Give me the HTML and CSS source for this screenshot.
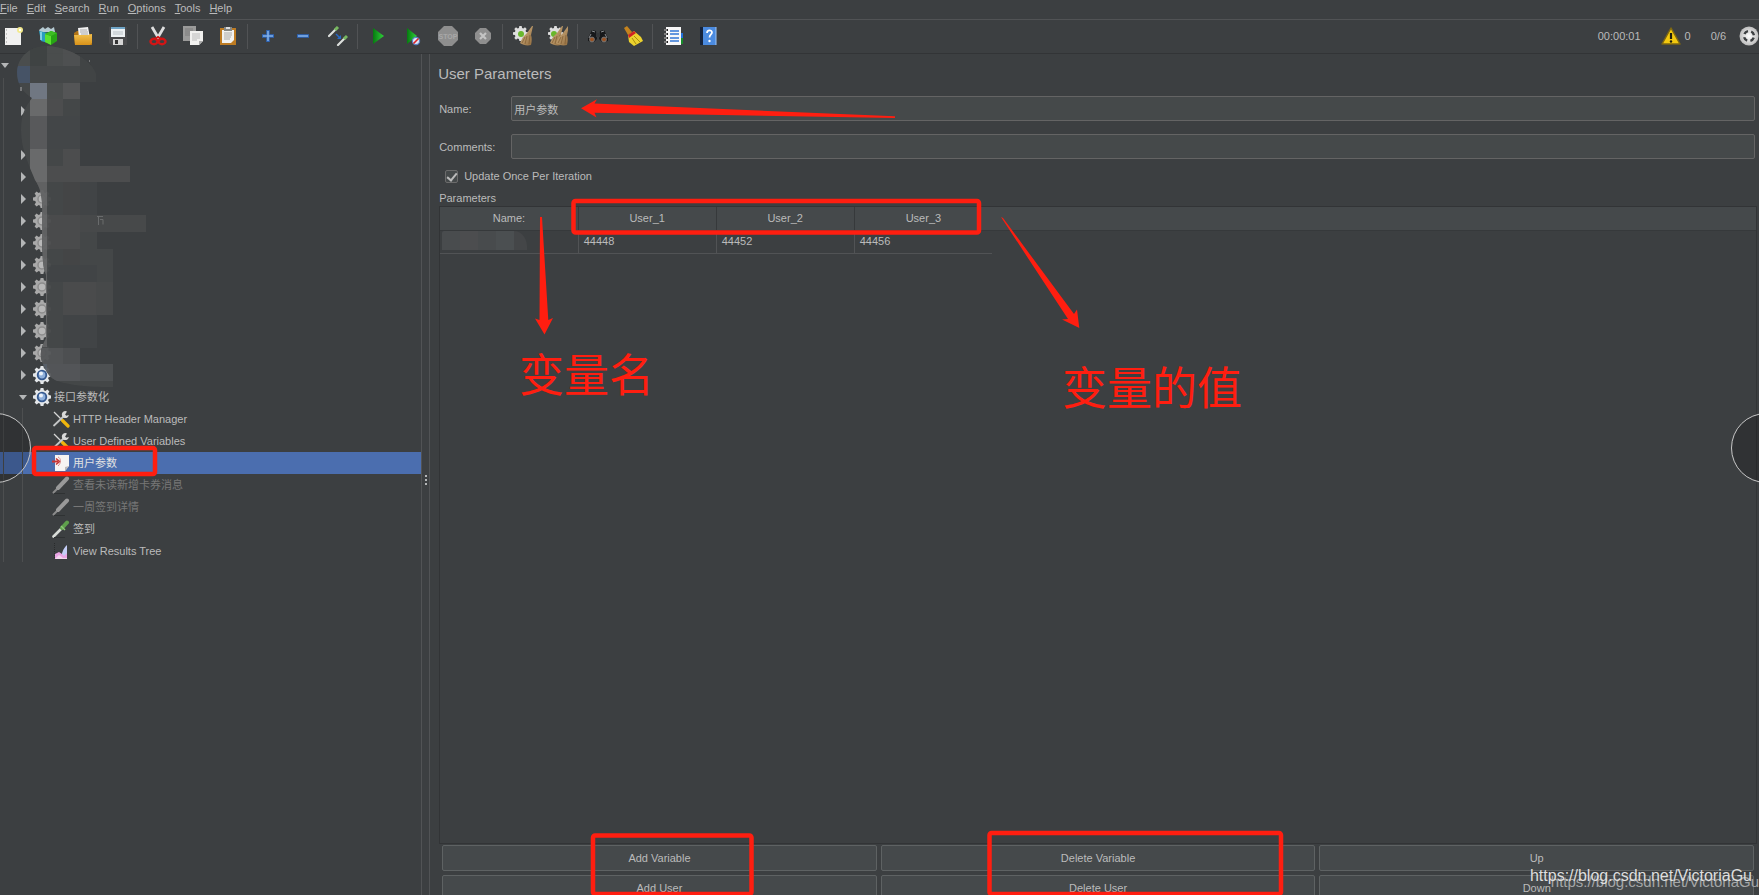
FILE: index.html
```html
<!DOCTYPE html>
<html lang="en">
<head>
<meta charset="utf-8">
<title>User Parameters</title>
<link rel="stylesheet" href="styles.css">
</head>
<body>
<svg class="sprite" aria-hidden="true">
  <defs>
    <linearGradient id="g-green" x1="0" y1="0" x2="1" y2="0"><stop offset="0" stop-color="#067a10"/><stop offset="1" stop-color="#2fd23a"/></linearGradient>
    <linearGradient id="g-yellow" x1="0" y1="0" x2="0" y2="1"><stop offset="0" stop-color="#f2c14e"/><stop offset="1" stop-color="#d8921a"/></linearGradient>
    <radialGradient id="g-ball"><stop offset="0" stop-color="#fff"/><stop offset="1" stop-color="#bdbdbd"/></radialGradient>
    <linearGradient id="g-broom" x1="0" y1="0" x2="1" y2="1"><stop offset="0" stop-color="#d9b98a"/><stop offset="1" stop-color="#8f6a3c"/></linearGradient>
  </defs>
  <symbol id="gear" viewBox="0 0 18 18">
    <path fill="currentColor" d="M7.600 0h2.800l.5 2.300 1.500.6 2-1.300 2 2-1.300 2 .6 1.500 2.300.5v2.800l-2.300.5-.6 1.500 1.300 2-2 2-2-1.300-1.500.6-.5 2.300H7.600l-.5-2.300-1.500-.6-2 1.300-2-2 1.300-2-.6-1.500L0 10.400V7.600l2.300-.5.6-1.500-1.300-2 2-2 2 1.300 1.500-.6z"/>
  </symbol>
  <symbol id="gear-off" viewBox="0 0 18 18"><use href="#gear" color="#a9a9a9"/><circle cx="9" cy="9" r="4" fill="#b8b8b8" stroke="#8d8d8d" stroke-width="1.500"/></symbol>
  <symbol id="gear-on" viewBox="0 0 18 18"><use href="#gear" color="#e4e7ea"/><circle cx="9" cy="9" r="4.300" fill="#8fb0dc" stroke="#34588f" stroke-width="1.800"/><circle cx="8" cy="7.500" r="2" fill="#eaf1fa"/></symbol>
  <symbol id="tools" viewBox="0 0 18 18">
    <path d="M2 2l8 8" stroke="#d6d6d6" stroke-width="1.300"/><path d="M10.500 10.500l5.500 5.500" stroke="#efb50c" stroke-width="3.200" stroke-linecap="round"/>
    <path d="M2 15.500L12 6" stroke="#c4c6c6" stroke-width="1.800" stroke-linecap="round"/><path d="M15 1.500a3.500 3.500 0 1 0 1.800 3.500l-2.500.7-1.200-1.300z" fill="#d9d9d9"/>
  </symbol>
  <symbol id="param" viewBox="0 0 18 18"><path d="M3 1h14v11l-4 5H3z" fill="#f6f4f3"/><path d="M17 12l-4 5v-4z" fill="#bdb9b7"/><path d="M0 7.500h6" stroke="#c83434" stroke-width="2"/><path d="M4 4.500L7.500 7.500L4 10.500" fill="none" stroke="#c83434" stroke-width="1.600"/><path d="M6 3c3 1 3.500 6 0 9" fill="none" stroke="#d98a8a"/></symbol>
  <symbol id="pipette-off" viewBox="0 0 18 18"><path d="M1.500 16.500L9 9" stroke="#8b8b8b" stroke-width="2" stroke-linecap="round"/><path d="M6 12l9-9.500" stroke="#999" stroke-width="4" stroke-linecap="round"/><path d="M2 17.500h11" stroke="#2f3233"/></symbol>
  <symbol id="pipette" viewBox="0 0 18 18"><path d="M1.500 16.500L10 8" stroke="#d8dcd8" stroke-width="2.600" stroke-linecap="round"/><path d="M10 8l5-5.500" stroke="#5fa04c" stroke-width="4" stroke-linecap="round"/><path d="M9 6l4 4" stroke="#8fca79" stroke-width="1.500"/><path d="M2 17.500h11" stroke="#2f3233"/></symbol>
  <symbol id="results" viewBox="0 0 18 18"><path d="M2.500 1v16" stroke="#292b2c" stroke-dasharray="1 1"/><path d="M3 17v-5l4-2 3 2 5-8v13z" fill="#e9a4e4"/><path d="M10 12c1-5 3-7 5-9v8l-3 3z" fill="#c3cdf6"/><path d="M3 17l4-4 4 3h4v1z" fill="#f3d5ee"/></symbol>
  <symbol id="brush" viewBox="0 0 14 20"><path d="M13 0l-5 7-4 4-3 6c3 2 7 3 11 2 1-4 1-7 0-10l2-9z" fill="url(#g-broom)"/><path d="M6 11l-3 6m5-7l-2 8m5-9l-1 9" stroke="#7c5a31" stroke-width=".7"/></symbol>
</svg>

<div class="app">
  <nav class="menu" aria-label="Main menu">
    <button><u>F</u>ile</button><button><u>E</u>dit</button><button><u>S</u>earch</button><button><u>R</u>un</button><button><u>O</u>ptions</button><button><u>T</u>ools</button><button><u>H</u>elp</button>
  </nav>

  <header class="toolbar">
    <div class="tools">
      <button aria-label="New"><svg viewBox="0 0 20 20"><path d="M2 2h16v17H2z" fill="#f1f1f0"/><path d="M3 4h1M3 8h1M3 12h1M3 16h1" stroke="#999"/><circle cx="17" cy="4" r="3" fill="#f3ea8c"/><circle cx="17" cy="4" r="1.200" fill="#fff"/></svg></button>
      <button aria-label="Templates"><svg viewBox="0 0 20 20"><path d="M1 4l4-3 2 2 3-2 3 2 3-2 1 5H2z" fill="#b6cbd3"/><path d="M1 5l9 2v10l-7-2z" fill="#2a9cc0"/><path d="M3 6v8" stroke="#9de0ef" stroke-width="1.500"/><path d="M7 8l6-3 6 2v8l-6 4-6-3z" fill="#27a414"/><path d="M7 8l6 2v9l-6-3z" fill="#5be02f"/><path d="M7 8l6-3 6 2-6 3z" fill="#3cbd22"/></svg></button>
      <button aria-label="Open"><svg viewBox="0 0 20 20"><path d="M1 7l3-2h5l2 3h8v11H2z" fill="#b17416"/><path d="M5 2l10-1 2 11H6z" fill="#f2f2f2"/><path d="M7 4h7M7 6h8M8 8h7" stroke="#aaa"/><path d="M1 9h14l4-1v9l-2 2H2z" fill="url(#g-yellow)"/></svg></button>
      <button aria-label="Save"><svg viewBox="0 0 20 20"><path d="M1 1h18v18H3l-2-2z" fill="#48494b"/><path d="M3 1h14v10H3z" fill="#edf1f3"/><path d="M3 2h14" stroke="#6fa5c7" stroke-width="2"/><path d="M5 6h10M5 8h10" stroke="#b9c1c6"/><path d="M5 13h10v6H5z" fill="#d5d5d5"/><path d="M7 14h3v4H7z" fill="#333"/></svg></button>
      <i class="sep"></i>
      <button aria-label="Cut"><svg viewBox="0 0 20 20"><path d="M4 1l7 12M16 1L9 13" stroke="#dedede" stroke-width="2.800"/><ellipse cx="6" cy="15.500" rx="3.500" ry="2.700" fill="none" stroke="#d31515" stroke-width="2.400"/><ellipse cx="14" cy="15.500" rx="3.500" ry="2.700" fill="none" stroke="#d31515" stroke-width="2.400"/><path d="M7 13l3-2 3 2" stroke="#d31515" stroke-width="2" fill="none"/></svg></button>
      <button aria-label="Copy"><svg viewBox="0 0 20 20"><path d="M0 0h13v15H0z" fill="#9b9b9a"/><path d="M2 3h8M2 5h8M2 7h8M2 9h5" stroke="#7c7c7c"/><path d="M7 5h13v10l-4 4H7z" fill="#f1f1ef"/><path d="M9 8h8M9 10h8M9 12h8M9 14h5" stroke="#bbb"/><path d="M20 15l-4 4v-4z" fill="#aaa"/></svg></button>
      <button aria-label="Paste"><svg viewBox="0 0 20 20"><path d="M2 2h16v17H2z" fill="#bd7b22"/><path d="M4 4h12v10l-3 3H4z" fill="#f2f2f0"/><path d="M6 1h8v4H6z" fill="#858784"/><path d="M8 1h4v2H8z" fill="#ddd"/><path d="M6 7h8M6 9h8M6 11h7M6 13h6" stroke="#aaa"/></svg></button>
      <i class="sep"></i>
      <button aria-label="Expand all"><svg viewBox="0 0 20 20"><path d="M10 4v12M4 10h12" stroke="#2d64b6" stroke-width="3.600"/><path d="M10 5v10M5 10h10" stroke="#80afe8" stroke-width="1.600"/></svg></button>
      <button aria-label="Collapse all"><svg viewBox="0 0 20 20"><path d="M4 10h12" stroke="#2d64b6" stroke-width="3.600"/><path d="M5 10h10" stroke="#80afe8" stroke-width="1.600"/></svg></button>
      <button aria-label="Toggle"><svg viewBox="0 0 20 20"><path d="M1 10L8 3M10 19l7-7" stroke="#dcdfdc" stroke-width="2.200" stroke-linecap="round"/><path d="M7 4l3-3M16 13l3-3" stroke="#77b860" stroke-width="3"/><path d="M8 8l4 4" stroke="#2668c7" stroke-width="1.500"/><path d="M13 9v4H9z" fill="#2668c7"/></svg></button>
      <i class="sep"></i>
      <button aria-label="Start"><svg viewBox="0 0 20 20"><path d="M5 2l11 8-11 8z" fill="url(#g-green)"/></svg></button>
      <button aria-label="Start no pauses"><svg viewBox="0 0 20 20"><path d="M4 2l10 8-10 8z" fill="url(#g-green)"/><circle cx="13" cy="15" r="3.600" fill="#dfe6f5" stroke="#5a83c8" stroke-width="1.200"/><path d="M10.500 17.500l5-5" stroke="#d22" stroke-width="1.600"/></svg></button>
      <button aria-label="Stop" disabled><svg class="wide" viewBox="0 0 22 22"><path d="M7 1h8l6 6v8l-6 6H7l-6-6V7z" fill="#8e8e8e"/><text x="11" y="14" class="stop-text">STOP</text></svg></button>
      <button aria-label="Shutdown" disabled><svg viewBox="0 0 20 20"><path d="M7 2h6l5 5v6l-5 5H7l-5-5V7z" fill="#8e8e8e"/><path d="M7 7l6 6m0-6l-6 6" stroke="#c4c4c4" stroke-width="2.200"/></svg></button>
      <i class="sep"></i>
      <button aria-label="Clear"><svg viewBox="0 0 20 20"><use href="#gear" width="15" height="15" color="#dedede"/><circle cx="8" cy="8" r="3" fill="#69b72c"/><use href="#brush" x="6" width="14" height="20"/></svg></button>
      <button aria-label="Clear all"><svg viewBox="0 0 20 20"><use href="#gear" width="15" height="15" color="#dedede"/><circle cx="6" cy="8" r="3" fill="#69b72c"/><use href="#brush" x="1" width="14" height="20"/><use href="#brush" x="7" width="14" height="20"/></svg></button>
      <i class="sep"></i>
      <button aria-label="Search"><svg viewBox="0 0 20 20"><path d="M4 4l4 1 1 8-3 3-6-1v-3zM16 4l-4 1-1 8 3 3 6-1v-3z" fill="#17181a"/><path d="M4 5l3 1M16 5l-3 1M3 8l-2 4M17 8l2 4" stroke="#8a8d90"/><path d="M8 7h4v4H8z" fill="#34373a"/><circle cx="4" cy="13.500" r="2.400" fill="#9a5222" stroke="#777"/><circle cx="16" cy="13.500" r="2.400" fill="#9a5222" stroke="#777"/></svg></button>
      <button aria-label="Reset search"><svg viewBox="0 0 20 20"><path d="M1 2l3-2 5 6-4 3z" fill="#c4831e"/><path d="M5 9l6-4 7 6 2 4-9 5-5-4z" fill="#ecd22e"/><path d="M5 9l6-4 2 2-7 5z" fill="#cf2424"/><path d="M9 12l4 6m-2-8l6 6" stroke="#a88d0c"/></svg></button>
      <i class="sep"></i>
      <button aria-label="Functions"><svg viewBox="0 0 20 20"><path d="M17 7h3v5h-3z" fill="#2370da"/><path d="M17 12h3v6h-3z" fill="#168c29"/><path d="M3 1h15v18H3z" fill="#f8f8f8"/><path d="M7 5h9M7 8h9M7 12h9M7 15h9" stroke="#3377d5" stroke-width="1.300"/><path d="M1 4h4M1 8h4M1 12h4M1 16h4" stroke="#222" stroke-width="2.200"/><path d="M1 4h3M1 8h3M1 12h3M1 16h3" stroke="#ddd"/></svg></button>
      <button aria-label="Help"><svg viewBox="0 0 20 20"><path d="M2 1h16v18H2z" fill="#4b8be0"/><path d="M2 1h3v18H2z" fill="#15233c"/><path d="M18 1v18" stroke="#9cc3f3"/><path d="M9 7c0-3.500 5-3.500 5-.5 0 2-2.500 2-2.500 5" fill="none" stroke="#fff" stroke-width="1.700"/><circle cx="11.500" cy="15" r="1.200" fill="#fff"/></svg></button>
    </div>
    <div class="status">
      <span>00:00:01</span>
      <button class="warn"><svg viewBox="0 0 20 20"><path d="M10 2l9 16H1z" fill="#f3c90f" stroke="#7d6712" stroke-width="1.500" stroke-linejoin="round"/><path d="M10 7v6" stroke="#1c1c10" stroke-width="2.200"/><circle cx="10" cy="15.500" r="1.200" fill="#1c1c10"/></svg>0</button>
      <span>0/6</span>
      <svg viewBox="0 0 20 20" aria-hidden="true"><circle cx="10" cy="10" r="9.500" fill="url(#g-ball)"/><circle cx="10" cy="10" r="5" fill="none" stroke="#3c3f41" stroke-width="2.400" stroke-dasharray="4.500 3.350" stroke-dashoffset="-1.700"/></svg>
    </div>
  </header>

  <div class="work">
    <aside class="tree">
      <ul>
        <li class="root"><i class="arrow open"></i></li>
        <li><i class="guide"></i></li>
        <li><i class="guide"></i><i class="arrow"></i></li>
        <li><i class="guide"></i></li>
        <li><i class="guide"></i><i class="arrow"></i></li>
        <li><i class="guide"></i><i class="arrow"></i></li>
        <li><i class="guide"></i><i class="arrow"></i><svg><use href="#gear-off"/></svg></li>
        <li><i class="guide"></i><i class="arrow"></i><svg><use href="#gear-off"/></svg></li>
        <li><i class="guide"></i><i class="arrow"></i><svg><use href="#gear-off"/></svg></li>
        <li><i class="guide"></i><i class="arrow"></i><svg><use href="#gear-off"/></svg></li>
        <li><i class="guide"></i><i class="arrow"></i><svg><use href="#gear-off"/></svg></li>
        <li><i class="guide"></i><i class="arrow"></i><svg><use href="#gear-off"/></svg></li>
        <li><i class="guide"></i><i class="arrow"></i><svg><use href="#gear-off"/></svg></li>
        <li><i class="guide"></i><i class="arrow"></i><svg><use href="#gear-off"/></svg></li>
        <li><i class="guide"></i><i class="arrow"></i><svg><use href="#gear-on"/></svg></li>
        <li><i class="guide"></i><i class="arrow open"></i><svg><use href="#gear-on"/></svg><span>接口参数化</span></li>
        <li><i class="guide"></i><i class="guide inner"></i><svg><use href="#tools"/></svg><span>HTTP Header Manager</span></li>
        <li><i class="guide"></i><i class="guide inner"></i><svg><use href="#tools"/></svg><span>User Defined Variables</span></li>
        <li class="selected"><i class="guide"></i><i class="guide inner"></i><svg><use href="#param"/></svg><span>用户参数</span></li>
        <li class="off"><i class="guide"></i><i class="guide inner"></i><svg><use href="#pipette-off"/></svg><span>查看未读新增卡券消息</span></li>
        <li class="off"><i class="guide"></i><i class="guide inner"></i><svg><use href="#pipette-off"/></svg><span>一周签到详情</span></li>
        <li><i class="guide"></i><i class="guide inner"></i><svg><use href="#pipette"/></svg><span>签到</span></li>
        <li><i class="guide"></i><i class="guide inner"></i><svg><use href="#results"/></svg><span>View Results Tree</span></li>
      </ul>
    </aside>
    <div class="divider"><i></i><i></i><i></i></div>

    <main class="panel">
      <h1>User Parameters</h1>
      <div class="field"><label for="name">Name:</label><input id="name" type="text" value="用户参数"></div>
      <div class="field"><label for="comments">Comments:</label><input id="comments" type="text"></div>
      <div class="check"><input id="once" type="checkbox" checked><label for="once">Update Once Per Iteration</label></div>
      <h2>Parameters</h2>
      <div class="grid">
        <table>
          <thead><tr><th>Name:</th><th>User_1</th><th>User_2</th><th>User_3</th><th class="rest"></th></tr></thead>
          <tbody><tr><td><svg class="mask" viewBox="0 0 86 20"><path d="M0 2q0-2 2-2h16v19H0z" fill="#494c4e"/><path d="M18 0h18v19H18z" fill="#4c4d4f"/><path d="M36 0h18v19H36z" fill="#484b4d"/><path d="M54 0h18v19H54z" fill="#4b4f51"/><path d="M72 0c8 0 14 8 13 19H72z" fill="#444648"/></svg></td><td>44448</td><td>44452</td><td>44456</td><td class="rest"></td></tr></tbody>
        </table>
      </div>
      <div class="actions">
        <button>Add Variable</button><button>Delete Variable</button><button>Up</button>
        <button>Add User</button><button>Delete User</button><button>Down</button>
      </div>
    </main>
  </div>

  <svg class="mosaic" viewBox="0 0 150 392" aria-hidden="true">
    <clipPath id="blob"><path d="M17 72C18 55 32 46 47 46C66 46 92 60 96 74V82H80V166H130V182H97V215H146V232H97V249H113V315H97V348H80V364H113V387C90 388 62 384 55 380C47 376 44 366 42 362C39 352 42 346 46 338V275C42 265 42 250 42 215C43 195 40 188 35 180C29 165 21 150 21 130C21 113 26 106 32 98C22 92 17 84 17 72z"/></clipPath>
    <g clip-path="url(#blob)" shape-rendering="crispEdges">
      <path fill="#454849" d="M0 40h150v352H0z"/>
      <path fill="#4b4e4e" d="M0 46h30v20H0zM47 46h16v20H47zM47 83h16v16H47z"/>
      <path fill="#404444" d="M30 46h17v20H30z"/>
      <path fill="#505152" d="M63 46h17v20H63z"/>
      <path fill="#475569" d="M0 66h30v17H0z"/>
      <path fill="#424546" d="M80 46h17v37H80z"/>
      <path fill="#737a86" d="M30 83h17v16H30z"/>
      <path fill="#565758" d="M63 83h17v16H63z"/>
      <path fill="#6c6d6e" d="M30 99h17v17H30zM30 149h17v33H30z"/>
      <path fill="#5a5b5d" d="M30 116h17v33H30z"/>
      <path fill="#4d4e4f" d="M47 99h16v17H47zM47 166h83v16H47zM63 149h17v17H63z"/>
      <path fill="#444749" d="M47 116h33v33H47z"/>
      <path fill="#626364" d="M30 182h17v165H30z"/>
      <path fill="#454647" d="M63 182h17v33H63zM63 249h17v16H63z"/>
      <path fill="#424547" d="M80 182h17v33H80zM47 265h50v17H47zM63 315h17v33H63zM80 315h17v33H80z"/>
      <path fill="#4b4c4d" d="M47 215h33v34H47zM63 282h33v33H63z"/>
      <path fill="#484a4b" d="M80 215h66v17H80zM96 282h17v33H96z"/>
      <path fill="#545658" d="M30 348h33v16H30z"/>
      <path fill="#4e5052" d="M63 348h17v16H63z"/>
      <path fill="#59606a" d="M30 364h17v28H30z"/>
      <path fill="#55575a" d="M47 364h33v17H47z"/>
      <path fill="#4e5153" d="M80 364h33v17H80z"/>
    </g>
    <path d="M97 216.500h6M98.500 216v9M100 219.500h3v5" fill="none" stroke="#6c6e6f"/>
    <path d="M21 87v4M89 61h1" stroke="#b8b8b8"/>
  </svg>

  <svg class="notes" aria-hidden="true">
    <g fill="#ff1e10">
      <path d="M581 108.300L597 99.300L594.500 103.500L895 116.300V118L594.500 112.700L596.500 117.500z"/>
      <path d="M540 217h2L548.300 320L553 318L544.500 334.500L535 318.500L539.500 320z"/>
      <path d="M1001 217l2 1L1074 314L1077 309.500L1079.300 328L1062 319.500L1068 319z"/>
    </g>
    <g fill="none" stroke="#ff1e10" stroke-width="4.500">
      <rect x="573.500" y="201" width="405.500" height="31.500" rx="2"/>
      <rect x="34" y="448" width="121" height="26" rx="2"/>
      <rect x="593" y="835.500" width="158.500" height="58.500" rx="2"/>
      <rect x="989.500" y="833" width="291.500" height="61" rx="2"/>
    </g>
  </svg>
  <p class="note variable">变量名</p>
  <p class="note value">变量的值</p>
  <i class="edge left"></i>
  <i class="edge right"></i>
  <p class="mark second">https://blog.csdn.net/VictoriaGu</p>
  <p class="mark first">https://blog.csdn.net/VictoriaGu</p>
</div>
</body>
</html>
```

FILE: styles.css
```css
* { box-sizing: border-box; }

body {
  margin: 0;
  overflow: hidden;
  background: #3c3f41;
  color: #bbb;
  font: 11px/14px "Liberation Sans", "Noto Sans CJK SC", sans-serif;
}

button, input { font: inherit; color: inherit; }
button { border: 0; padding: 0; background: none; }
ul, h1, h2, p { margin: 0; padding: 0; list-style: none; font-weight: normal; }
svg { flex: none; }

.sprite { position: absolute; width: 0; height: 0; }

.app {
  position: relative;
  display: flex;
  flex-direction: column;
  height: 100vh;
  overflow: hidden;
}

/* menu and toolbar */
.menu {
  display: flex;
  gap: 9px;
  height: 20px;
  padding-bottom: 4px;
  border-bottom: 1px solid #515355;
}

.toolbar {
  display: flex;
  justify-content: space-between;
  height: 34px;
  padding-bottom: 1px;
  border-bottom: 1px solid #323436;
}
.tools { display: flex; align-items: center; margin-left: -5px; }
.tools button { display: flex; justify-content: center; width: 35px; }
.tools svg { width: 20px; height: 20px; }
.tools .wide { width: 22px; height: 22px; }
.sep { width: 1px; height: 25px; margin: 0 2px; background: #515355; }
.stop-text { font-size: 7px; font-weight: bold; text-anchor: middle; fill: #a8a8a8; }

.status { display: flex; align-items: center; }
.status svg { width: 20px; height: 20px; }
.status > svg { margin-left: 13px; }
.warn { display: flex; align-items: center; gap: 4px; margin: 0 20px; }

/* test plan tree */
.work { display: flex; flex: 1; min-height: 0; }
.tree { width: calc(24% - 1px); padding-top: 2px; }
.tree li { display: flex; align-items: center; height: 22px; }
.tree svg { width: 18px; height: 18px; margin: 0 3px 0 5px; }
.guide { align-self: stretch; width: 15px; margin-left: 3px; border-left: 1px solid #4d4f50; }
.inner { width: 26px; margin-left: 4px; }
.inner + svg { margin-left: 4px; }
.arrow { display: flex; justify-content: center; width: 10px; }
.arrow::before {
  content: "";
  border: solid transparent;
  border-width: 5px 0 5px 5px;
  border-left-color: #b4b6b7;
}
.arrow.open::before { border-width: 5px 4px 0; border-color: #b4b6b7 transparent transparent; }
.root { padding-bottom: 3px; }
.selected { background: #4b6eaf; color: #e2e2e2; }
.off { color: #777; }

.divider {
  display: flex;
  flex-direction: column;
  align-items: center;
  justify-content: center;
  gap: 2px;
  width: 9px;
  padding-top: 10px;
  border: solid #515355;
  border-width: 0 1px;
}
.divider i { width: 2px; height: 2px; background: #b4b6b7; }

/* editor panel */
.panel { display: flex; flex: 1; flex-direction: column; min-width: 0; padding: 10px 2px 0 8px; }
h1 { margin-bottom: 12px; font-size: 15px; line-height: 20px; }
.field { display: flex; align-items: center; margin: 0 2px 13px 1px; }
.field label { width: 72px; }
.field input {
  flex: 1;
  height: 25px;
  padding: 0 2px;
  border: 1px solid #646464;
  border-radius: 2px;
  background: #45494a;
  outline: 0;
}
.check { display: flex; align-items: center; gap: 6px; margin: -3px 0 8px 7px; }
.check input {
  display: grid;
  place-items: center;
  width: 13px;
  height: 13px;
  margin: 0;
  border: 1px solid #6b6b6b;
  border-radius: 2px;
  background: #45494a;
  appearance: none;
}
.check input::before {
  content: "";
  width: 4px;
  height: 8px;
  border: solid #bbb;
  border-width: 0 2px 2px 0;
  transform: rotate(40deg);
}
h2 { margin-left: 1px; font-size: 11px; line-height: 14px; }

.grid { flex: 1; margin: 1px 0 1px 1px; border: 1px solid #323436; }
table { width: 100%; table-layout: fixed; border-collapse: collapse; }
th, td { width: 138px; padding: 0; }
th { height: 23px; border: solid #36393b; border-width: 0 1px 1px 0; background: #45494b; font-weight: normal; }
td { height: 22px; padding: 0 0 2px 5px; border: solid #515355; border-width: 0 1px 1px 0; }
th:nth-child(4), td:nth-child(4) { border-right: 0; }
th.rest, td.rest { width: auto; border-right: 0; }
td.rest { border-bottom: 0; }
.mask { display: block; width: 86px; height: 20px; margin-left: -3px; }

.actions {
  display: grid;
  grid-template-columns: repeat(3, 1fr);
  gap: 4px;
  margin: 0 3px -6px 4px;
}
.actions button { height: 26px; border: 1px solid #5e6263; border-radius: 2px; background: #45494b; }

/* annotations lying over the window */
.mosaic { position: absolute; top: 0; left: 0; width: 150px; height: 392px; opacity: 0.95; }
.notes { position: absolute; top: 0; left: 0; width: 100%; height: 100%; pointer-events: none; }
.note { position: absolute; color: #ff1e10; font: 45px/48px "Noto Sans CJK SC", sans-serif; }
.variable { top: 349px; left: 519px; }
.value { top: 362px; left: 1062px; }
.edge {
  position: absolute;
  top: 413px;
  width: 70px;
  height: 70px;
  border: 1px solid #c8c8c8;
  border-radius: 50%;
  background: rgba(0, 0, 0, 0.2);
}
.edge.left { left: -39px; }
.edge.right { right: -42px; }
.mark { position: absolute; white-space: nowrap; }
.first { right: 7px; bottom: 9px; color: #dedede; font-size: 16px; line-height: 20px; }
.second { right: 0; bottom: 3px; color: #a4a6a7; font-size: 15px; line-height: 20px; }
```
